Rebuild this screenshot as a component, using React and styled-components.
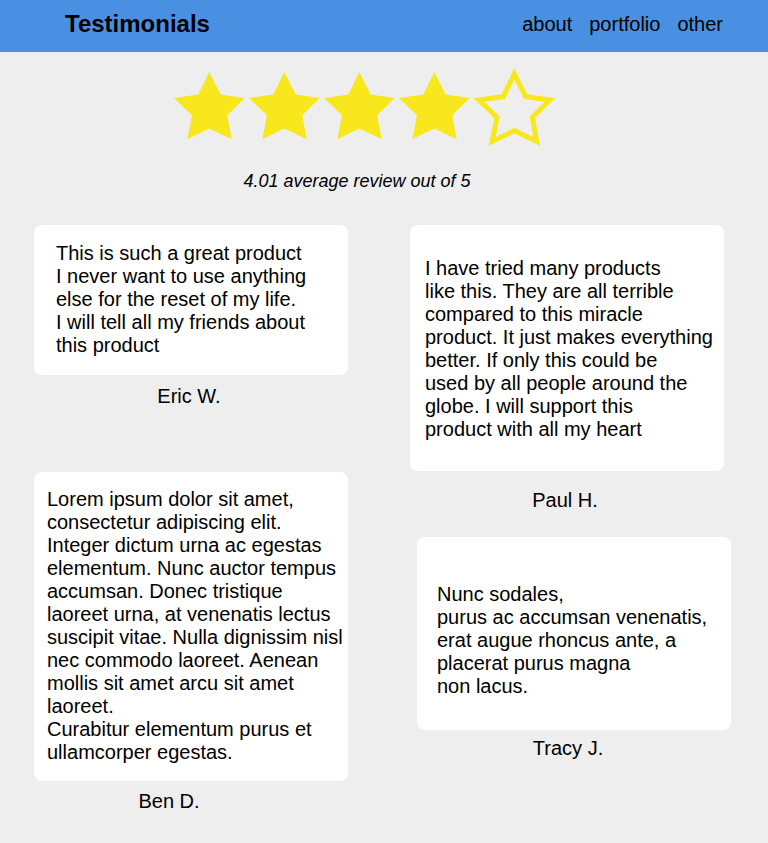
import React from 'react'
import styled, { createGlobalStyle } from 'styled-components'

const GlobalStyle = createGlobalStyle`
  html, body {
    margin: 0;
    padding: 0;
    background: #eeeeee;
  }
  body {
    font-family: "Liberation Sans", Arial, Helvetica, sans-serif;
    color: #000;
  }
`

const Page = styled.div`
  min-height: 843px;
  background: #eeeeee;
`

const Header = styled.header`
  height: 52px;
  box-sizing: border-box;
  background: #4a90e2;
  display: flex;
  align-items: center;
  justify-content: space-between;
  padding: 0 45px 4px 65px;
`

const Brand = styled.h1`
  margin: 0;
  font-size: 24px;
  font-weight: 700;
`

const Nav = styled.nav`
  display: flex;
  gap: 17px;
`

const NavLink = styled.a`
  font-size: 20px;
  color: #000;
  text-decoration: none;
`

const Rating = styled.section`
  display: flex;
  flex-direction: column;
  align-items: center;
  padding: 20px 44px 0 0;
`

const StarRow = styled.div`
  display: flex;
  align-items: flex-start;
  gap: 4px;
`

const StarSvg = styled.svg`
  display: block;
  overflow: visible;
  margin-left: ${(p) => (p.$empty ? '5px' : '0')};
  margin-top: ${(p) => (p.$empty ? '2px' : '0')};
`

const Average = styled.p`
  margin: 29px 10px 0 0;
  font-size: 18px;
  font-style: italic;
`

const Board = styled.main`
  display: flex;
  padding: 33px 0 0 34px;
`

const Column = styled.div`
  display: flex;
  flex-direction: column;
  margin-left: ${(p) => p.$offset || 0}px;
`

const Item = styled.figure`
  margin: ${(p) => p.$top || 0}px 0 0 ${(p) => p.$left || 0}px;
  width: 314px;
`

const Card = styled.blockquote`
  margin: 0;
  box-sizing: border-box;
  width: 314px;
  height: ${(p) => p.$height}px;
  padding: ${(p) => p.$pad};
  background: #fff;
  border-radius: 8px;
  font-size: 20px;
  line-height: 23px;
  white-space: nowrap;
`

const Name = styled.figcaption`
  margin-top: ${(p) => p.$gap}px;
  padding-right: ${(p) => p.$shift * 2}px;
  text-align: center;
  font-size: 20px;
  line-height: 23px;
`

const STAR =
  '35.3,0 46.7,22.6 70.7,26 53.3,43.3 57.7,67.3 35.3,56.6 13.3,67.3 18,43.3 0,26 24.3,22.6'

function Star({ empty }) {
  return (
    <StarSvg $empty={empty} width="71" height="68" viewBox="0 0 71 68">
      <polygon
        points={STAR}
        fill={empty ? 'none' : '#f8e71c'}
        stroke={empty ? '#f8e71c' : 'none'}
        strokeWidth="5"
      />
    </StarSvg>
  )
}

const reviews = {
  left: [
    {
      name: 'Eric W.',
      height: 150,
      pad: '17px 20px 0 22px',
      gap: 10,
      shift: 2,
      top: 0,
      left: 0,
      lines: [
        'This is such a great product',
        'I never want to use anything',
        'else for the reset of my life.',
        'I will tell all my friends about',
        'this product',
      ],
    },
    {
      name: 'Ben D.',
      height: 309,
      pad: '16px 4px 0 13px',
      gap: 9,
      shift: 22,
      top: 64,
      left: 0,
      lines: [
        'Lorem ipsum dolor sit amet,',
        'consectetur adipiscing elit.',
        'Integer dictum urna ac egestas',
        'elementum. Nunc auctor tempus',
        'accumsan. Donec tristique',
        'laoreet urna, at venenatis lectus',
        'suscipit vitae. Nulla dignissim nisl',
        'nec commodo laoreet. Aenean',
        'mollis sit amet arcu sit amet',
        'laoreet.',
        'Curabitur elementum purus et',
        'ullamcorper egestas.',
      ],
    },
  ],
  right: [
    {
      name: 'Paul H.',
      height: 246,
      pad: '32px 8px 0 15px',
      gap: 18,
      shift: 2,
      top: 0,
      left: 0,
      lines: [
        'I have tried many products',
        'like this. They are all terrible',
        'compared to this miracle',
        'product. It just makes everything',
        'better. If only this could be',
        'used by all people around the',
        'globe. I will support this',
        'product with all my heart',
      ],
    },
    {
      name: 'Tracy J.',
      height: 193,
      pad: '46px 10px 0 20px',
      gap: 7,
      shift: 6,
      top: 25,
      left: 7,
      lines: [
        'Nunc sodales,',
        'purus ac accumsan venenatis,',
        'erat augue rhoncus ante, a',
        'placerat purus magna',
        'non lacus.',
      ],
    },
  ],
}

function Testimonial({ review }) {
  return (
    <Item $top={review.top} $left={review.left}>
      <Card $height={review.height} $pad={review.pad}>
        {review.lines.map((line, i) => (
          <React.Fragment key={i}>
            {line}
            {i < review.lines.length - 1 && <br />}
          </React.Fragment>
        ))}
      </Card>
      <Name $gap={review.gap} $shift={review.shift}>
        {review.name}
      </Name>
    </Item>
  )
}

export default function App() {
  return (
    <Page>
      <GlobalStyle />
      <Header>
        <Brand>Testimonials</Brand>
        <Nav>
          <NavLink href="#">about</NavLink>
          <NavLink href="#">portfolio</NavLink>
          <NavLink href="#">other</NavLink>
        </Nav>
      </Header>
      <Rating>
        <StarRow>
          <Star />
          <Star />
          <Star />
          <Star />
          <Star empty />
        </StarRow>
        <Average>4.01 average review out of 5</Average>
      </Rating>
      <Board>
        <Column>
          {reviews.left.map((r) => (
            <Testimonial key={r.name} review={r} />
          ))}
        </Column>
        <Column $offset={62}>
          {reviews.right.map((r) => (
            <Testimonial key={r.name} review={r} />
          ))}
        </Column>
      </Board>
    </Page>
  )
}
